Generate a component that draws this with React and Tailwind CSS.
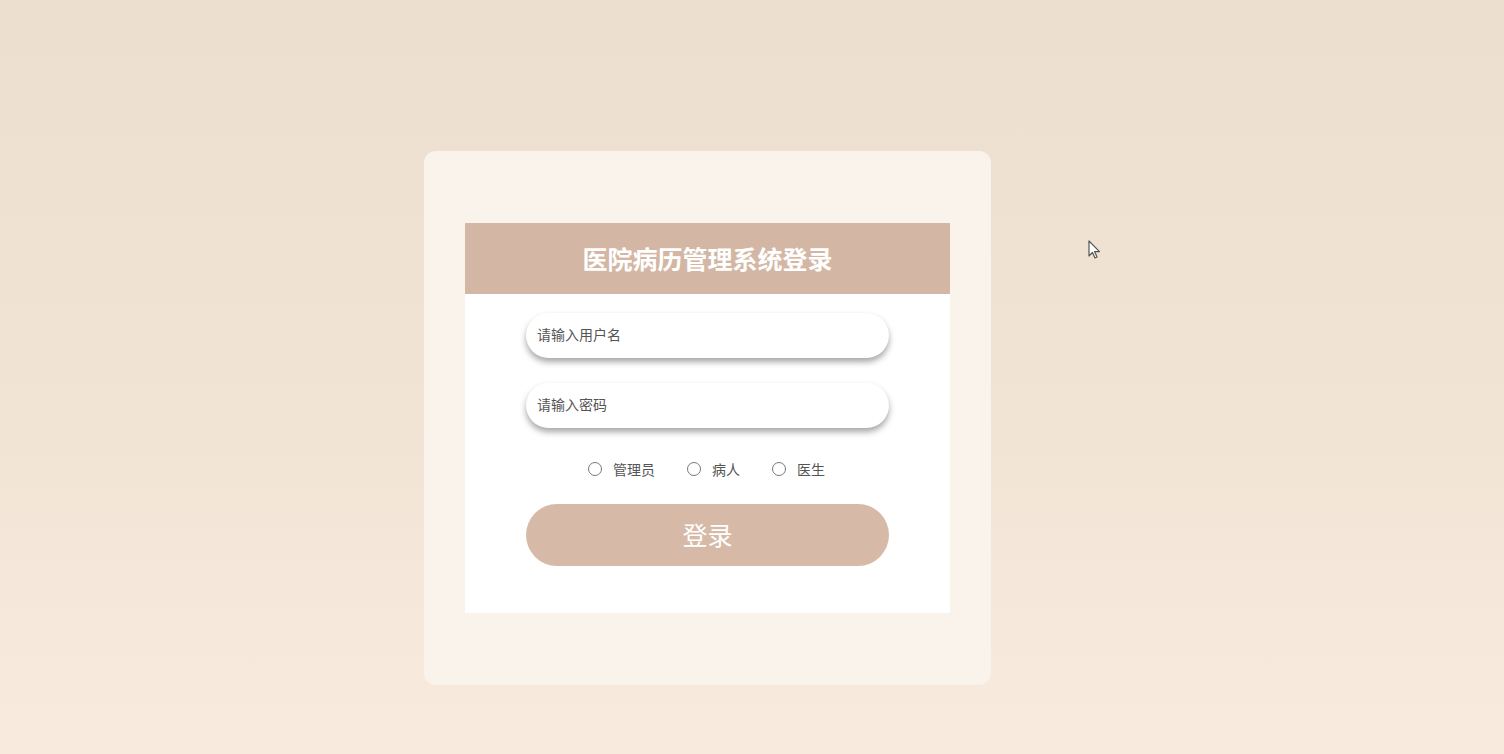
import { useState } from 'react'

const roles = ['管理员', '病人', '医生']

const Cursor = () => (
  <svg width="14" height="20" viewBox="0 0 14 20" className="absolute left-[1088px] top-[240px]">
    <path d="M1 1 L1 16 L4.5 12.5 L7 18 L9 17 L6.6 11.6 L11.5 11.6 Z" fill="#fff" stroke="#555" strokeWidth="1.2" strokeLinejoin="round" />
  </svg>
)

export default function App() {
  const [role, setRole] = useState(null)

  return (
    <div
      className="relative min-h-[754px] bg-gradient-to-b from-[#ecdfd0] via-[#f1e3d4] to-[#f8eadd] pl-[424px] pt-[151px]"
      style={{ fontFamily: '"Noto Sans CJK SC", "Noto Sans", sans-serif' }}
    >
      <div className="w-[567px] rounded-xl bg-[#faf3eb] px-[41px] pb-[72px] pt-[72px]">
        <div className="bg-white pb-[47px]">
          <div className="flex h-[71px] items-center justify-center bg-[#d3b7a4]">
            <h1 className="text-[25px] font-bold text-white">医院病历管理系统登录</h1>
          </div>

          <div className="mx-auto mt-[19px] flex w-[363px] flex-col">
            <input
              type="text"
              placeholder="请输入用户名"
              className="h-[45px] rounded-full bg-white px-[11px] pb-[4px] text-sm text-[#444] shadow-[0_4px_6px_rgba(0,0,0,0.35)] outline-none placeholder:text-[#555]"
            />
            <input
              type="password"
              placeholder="请输入密码"
              className="mt-[25px] h-[45px] rounded-full bg-white px-[11px] pb-[4px] text-sm text-[#444] shadow-[0_4px_6px_rgba(0,0,0,0.35)] outline-none placeholder:text-[#555]"
            />

            <div className="mt-[31px] flex items-center justify-center gap-8 pr-[2px] text-sm text-[#555]">
              {roles.map((r) => (
                <label key={r} className="flex cursor-pointer items-center gap-[11px]">
                  <span
                    onClick={() => setRole(r)}
                    className="flex h-[14px] w-[14px] items-center justify-center rounded-full border-[1.5px] border-[#777]"
                  >
                    {role === r && <span className="h-[7px] w-[7px] rounded-full bg-[#777]" />}
                  </span>
                  <span onClick={() => setRole(r)}>{r}</span>
                </label>
              ))}
            </div>

            <button className="mt-[25px] h-[62px] rounded-full bg-[#d6baa7] text-[25px] text-white">登录</button>
          </div>
        </div>
      </div>
      <Cursor />
    </div>
  )
}
